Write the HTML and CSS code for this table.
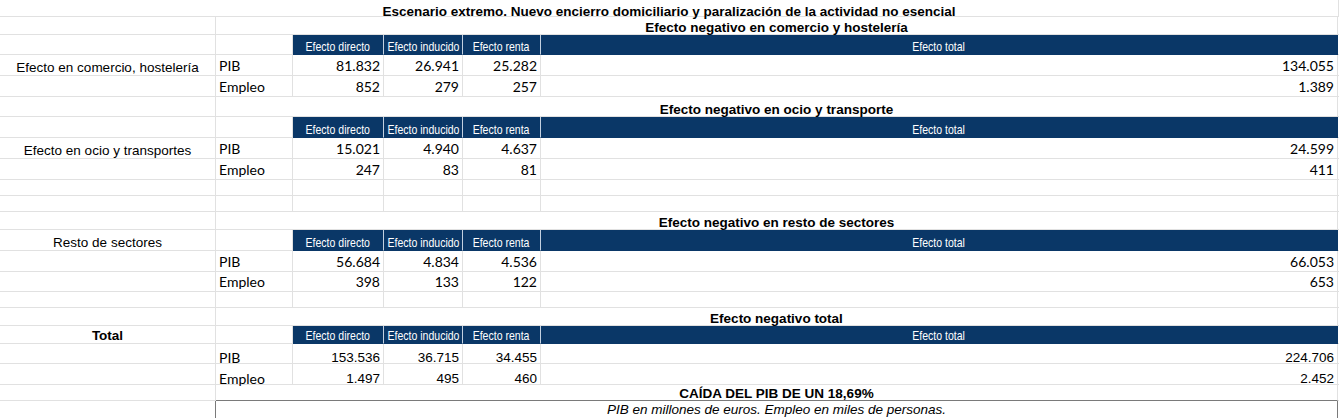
FILE: index.html
```html
<!DOCTYPE html>
<html lang="es">
<head>
<meta charset="utf-8">
<title>Escenario extremo</title>
<link rel="stylesheet" href="styles.css">
</head>
<body>
<div class="sheet">
  <div class="row h17"><div class="c all title">Escenario extremo. Nuevo encierro domiciliario y paralización de la actividad no esencial</div></div>

  <div class="row h18"><div class="c"></div><div class="c span5 sec">Efecto negativo en comercio y hostelería</div><div class="c g"></div></div>
  <div class="row h20"><div class="c"></div><div class="c"></div><div class="c hd"><span>Efecto directo</span></div><div class="c hd"><span>Efecto inducido</span></div><div class="c hd"><span>Efecto renta</span></div><div class="c hd last"><span>Efecto total</span></div><div class="c g"></div></div>
  <div class="row h21 cal"><div class="c lab">Efecto en comercio, hostelería</div><div class="c kind">PIB</div><div class="c num">81.832</div><div class="c num">26.941</div><div class="c num">25.282</div><div class="c num">134.055</div><div class="c g"></div></div>
  <div class="row h21 cal"><div class="c"></div><div class="c kind">Empleo</div><div class="c num">852</div><div class="c num">279</div><div class="c num">257</div><div class="c num">1.389</div><div class="c g"></div></div>

  <div class="row h20"><div class="c"></div><div class="c span5 sec">Efecto negativo en ocio y transporte</div><div class="c g"></div></div>
  <div class="row h21"><div class="c"></div><div class="c"></div><div class="c hd"><span>Efecto directo</span></div><div class="c hd"><span>Efecto inducido</span></div><div class="c hd"><span>Efecto renta</span></div><div class="c hd last"><span>Efecto total</span></div><div class="c g"></div></div>
  <div class="row h21 cal"><div class="c lab">Efecto en ocio y transportes</div><div class="c kind">PIB</div><div class="c num">15.021</div><div class="c num">4.940</div><div class="c num">4.637</div><div class="c num">24.599</div><div class="c g"></div></div>
  <div class="row h21 cal"><div class="c"></div><div class="c kind">Empleo</div><div class="c num">247</div><div class="c num">83</div><div class="c num">81</div><div class="c num">411</div><div class="c g"></div></div>
  <div class="row h16"><div class="c"></div><div class="c"></div><div class="c"></div><div class="c"></div><div class="c"></div><div class="c"></div><div class="c g"></div></div>
  <div class="row h16"><div class="c"></div><div class="c"></div><div class="c"></div><div class="c"></div><div class="c"></div><div class="c"></div><div class="c g"></div></div>

  <div class="row h18"><div class="c"></div><div class="c span5 sec">Efecto negativo en resto de sectores</div><div class="c g"></div></div>
  <div class="row h21"><div class="c lab">Resto de sectores</div><div class="c"></div><div class="c hd"><span>Efecto directo</span></div><div class="c hd"><span>Efecto inducido</span></div><div class="c hd"><span>Efecto renta</span></div><div class="c hd last"><span>Efecto total</span></div><div class="c g"></div></div>
  <div class="row h21 cal"><div class="c"></div><div class="c kind">PIB</div><div class="c num">56.684</div><div class="c num">4.834</div><div class="c num">4.536</div><div class="c num">66.053</div><div class="c g"></div></div>
  <div class="row h20 cal"><div class="c"></div><div class="c kind">Empleo</div><div class="c num">398</div><div class="c num">133</div><div class="c num">122</div><div class="c num">653</div><div class="c g"></div></div>
  <div class="row h16"><div class="c"></div><div class="c"></div><div class="c"></div><div class="c"></div><div class="c"></div><div class="c"></div><div class="c g"></div></div>

  <div class="row h18"><div class="c"></div><div class="c span5 sec">Efecto negativo total</div><div class="c g"></div></div>
  <div class="row h18"><div class="c lab strong">Total</div><div class="c"></div><div class="c hd"><span>Efecto directo</span></div><div class="c hd"><span>Efecto inducido</span></div><div class="c hd"><span>Efecto renta</span></div><div class="c hd last"><span>Efecto total</span></div><div class="c g"></div></div>
  <div class="row h20 tot"><div class="c"></div><div class="c kind cal">PIB</div><div class="c num">153.536</div><div class="c num">36.715</div><div class="c num">34.455</div><div class="c num">224.706</div><div class="c g"></div></div>
  <div class="row h21 tot"><div class="c"></div><div class="c kind cal">Empleo</div><div class="c num">1.497</div><div class="c num">495</div><div class="c num">460</div><div class="c num">2.452</div><div class="c g"></div></div>

  <div class="row h16"><div class="c"></div><div class="c span5 sec drop boxed-top">CAÍDA DEL PIB DE UN 18,69%</div><div class="c g"></div></div>
  <div class="row h20"><div class="c"></div><div class="c span5 note">PIB en millones de euros. Empleo en miles de personas.</div><div class="c g"></div></div>
</div>
</body>
</html>
```

FILE: styles.css
```css
html, body {
  margin: 0;
  padding: 0;
  background: #ffffff;
}

.sheet {
  width: 1339px;
  font-family: "Liberation Sans", Arial, sans-serif;
  font-size: 13.5px;
  color: #000000;
}

.row {
  display: grid;
  grid-template-columns: 216px 77px 91px 79px 78px 797px 1px;
}

.h16 { height: 16px; }
.h17 { height: 17px; }
.h18 { height: 18px; }
.h20 { height: 20px; }
.h21 { height: 21px; }

.c {
  box-sizing: border-box;
  border-right: 1px solid #e1e1e1;
  border-bottom: 1px solid #e1e1e1;
  display: flex;
  align-items: flex-end;
  padding: 0 3px 1px;
  line-height: 13px;
  white-space: nowrap;
  overflow: visible;
  min-width: 0;
}

.g {
  padding: 0;
  border-right: none;
}

.all {
  grid-column: 1 / -1;
  justify-content: center;
}

.span5 {
  grid-column: span 5;
  justify-content: center;
}

.title,
.sec,
.strong {
  font-weight: bold;
}

.title {
  line-height: 6px;
}

.sec {
  line-height: 11px;
}

.sec.drop {
  line-height: 10px;
}

.lab {
  justify-content: center;
}

.kind {
  justify-content: flex-start;
}

.num {
  justify-content: flex-end;
}

.cal .c,
.c.cal {
  font-family: Lato, "Open Sans", sans-serif;
  font-size: 14px;
  line-height: 14px;
  padding-bottom: 2px;
}

.cal .c.lab {
  font-family: "Liberation Sans", Arial, sans-serif;
  font-size: 13.5px;
  line-height: 13px;
  padding-bottom: 1px;
}

.tot .c {
  padding-bottom: 0;
  line-height: 10px;
}

.tot .c.cal {
  padding-bottom: 0;
  line-height: 11px;
}

.hd {
  background: #0a3767;
  color: #ffffff;
  justify-content: center;
  font-size: 13px;
  line-height: 13px;
  padding-bottom: 1px;
  border-right: 1px solid #c3d0e0;
  border-bottom-color: #0a3767;
}

.hd span {
  display: inline-block;
  transform: scaleX(0.81);
}

.hd.last {
  border-right-color: #0a3767;
}

.boxed-top {
  border-bottom: 1px solid #7a7a7a;
}

.note {
  font-style: italic;
  border-left: 1px solid #7a7a7a;
  border-right: 1px solid #7a7a7a;
  border-bottom: none;
  margin-left: -1px;
  align-items: flex-start;
  padding-top: 2px;
}
```
